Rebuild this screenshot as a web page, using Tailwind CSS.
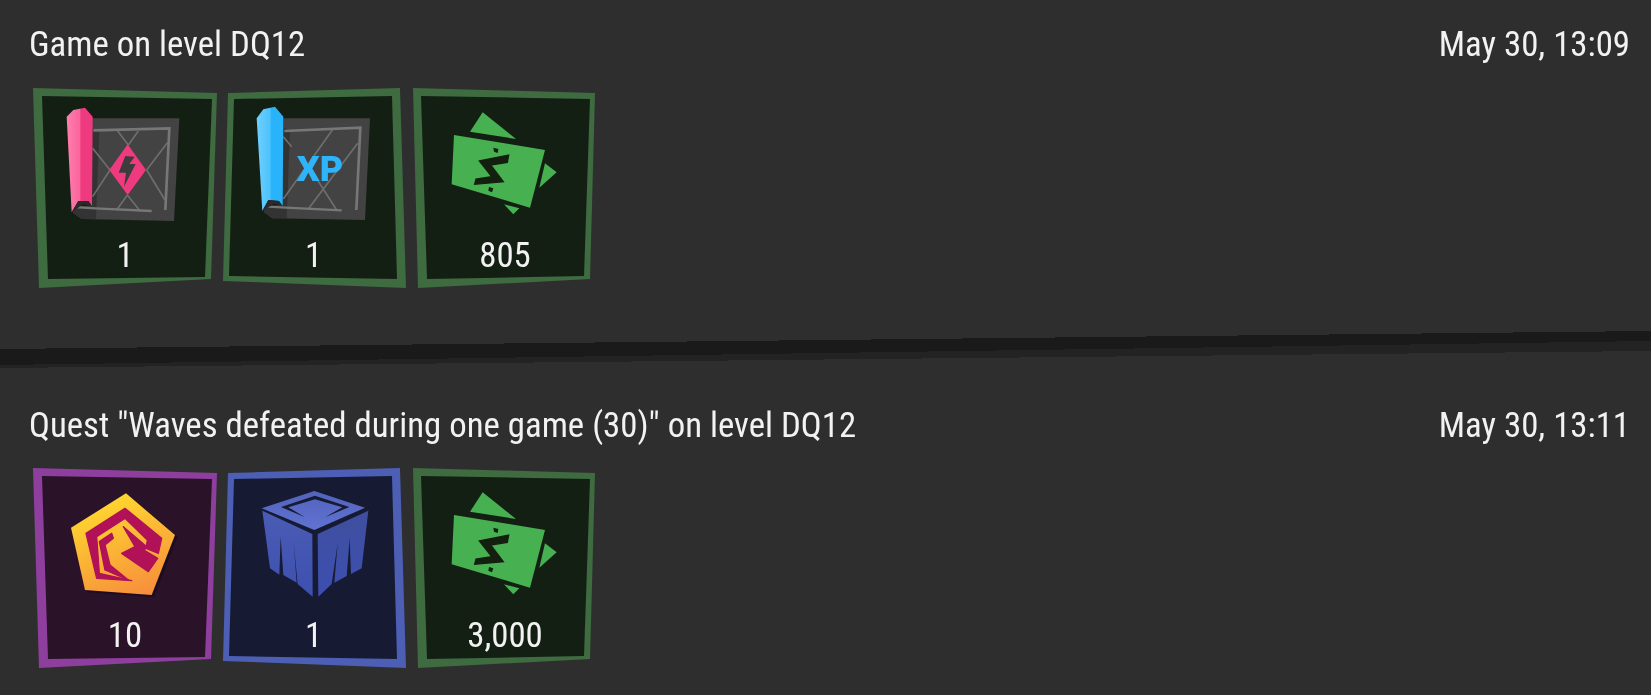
<!DOCTYPE html>
<html lang="en">
<head>
<meta charset="utf-8">
<script src="https://cdn.jsdelivr.net/npm/@tailwindcss/browser@4"></script>
<title>Rewards</title>
</head>
<body class="m-0 w-[1651px] h-[695px] overflow-hidden bg-[#2e2e2e] text-[#f2f2f2] [font-family:Roboto,sans-serif]">
<svg width="0" height="0" class="absolute">
  <defs>
    <linearGradient id="pink" x1="0" x2="1" y1="0" y2="0"><stop offset="0" stop-color="#ff7fae"/><stop offset=".5" stop-color="#fa659c"/><stop offset=".55" stop-color="#f03a80"/><stop offset="1" stop-color="#f03a80"/></linearGradient>
    <linearGradient id="blue" x1="0" x2="1" y1="0" y2="0"><stop offset="0" stop-color="#6fd0ff"/><stop offset=".5" stop-color="#4cc2fc"/><stop offset=".55" stop-color="#28b3fb"/><stop offset="1" stop-color="#28b3fb"/></linearGradient>
    <linearGradient id="gold" x1="0.3" x2="0.7" y1="0" y2="1"><stop offset="0" stop-color="#ffdc2e"/><stop offset="1" stop-color="#f78f3c"/></linearGradient>
    <linearGradient id="cubeL" x1="0" x2="0" y1="0" y2="1"><stop offset="0" stop-color="#4a5cb4"/><stop offset="1" stop-color="#3d50b0"/></linearGradient>
    <linearGradient id="cubeR" x1="0" x2="0" y1="0" y2="1"><stop offset="0" stop-color="#3f4f9f"/><stop offset="1" stop-color="#3c4fb0"/></linearGradient>
    <linearGradient id="cubeT" x1="0" x2="0" y1="0" y2="1"><stop offset="0" stop-color="#5263bb"/><stop offset="1" stop-color="#6073d2"/></linearGradient>
  </defs>
</svg>

<main class="flex flex-col">
  <section class="h-[331px] pl-[29px] pr-[21px] pt-[23px] flex flex-col blur-[0.5px]">
    <div class="flex justify-between items-center h-[42px] text-[34.8px] leading-[42px]">
      <span class="[font-stretch:75%]">Game on level DQ12</span>
      <span class="[font-stretch:75%]">May 30, 13:09</span>
    </div>
    <div class="flex gap-[6px] mt-[22px] ml-[4px]">
      <!-- map pink -->
      <div class="relative w-[184px] h-[202px] flex flex-col items-center justify-end pb-[17px]">
        <svg class="absolute inset-0" width="184" height="202" viewBox="0 0 184 202" aria-hidden="true">
          <polygon points="0,1 184,6 178,192 6,201" fill="#3f6b41"/>
          <polygon points="9,9 179,12 172,190 15,192" fill="#141f14"/>
          <g transform="translate(-13 -12) scale(.33333)">
            <polygon points="215,130 478,130 462,438 185,432 160,415 158,400 215,395" fill="#434343"/>
            <polygon points="215,160 238,168 228,432 185,432 160,415 160,400 212,390" fill="#333333"/>
            <path d="M293,168 L325,210 M355,168 L325,210 M290,405 L322,360 M358,405 L322,360 M218,220 L270,285 M218,365 L270,285 M442,203 L380,285 M435,375 L380,285" fill="none" stroke="#6e6e6e" stroke-width="5"/>
            <path d="M220,166 L448,160 L436,405" fill="none" stroke="#777" stroke-width="8"/>
            <path d="M165,396 L225,400 L395,408" fill="none" stroke="#777" stroke-width="7"/>
            <polygon points="323,208 378,285 323,360 268,285" fill="#f03a80"/>
            <polygon points="316,243 344,245 328,267 347,267 312,335 318,293 296,293" fill="#3c3c3c"/>
            <polygon points="140,125 160,105 195,98 218,125 216,392 205,378 175,378 155,412" fill="url(#pink)"/>
            <polygon points="155,412 175,378 205,378 212,394 190,388 172,400" fill="#2a2a2a"/>
          </g>
        </svg>
        <span class="relative text-[34.8px] leading-[33px] [font-stretch:75%]">1</span>
      </div>
      <!-- map blue -->
      <div class="relative w-[184px] h-[202px] flex flex-col items-center justify-end pb-[17px]">
        <svg class="absolute inset-0" width="184" height="202" viewBox="0 0 184 202" aria-hidden="true">
          <polygon points="5,6 177,1 183,201 0,194" fill="#3f6b41"/>
          <polygon points="11,12 169,9 174,192 6,189" fill="#141f14"/>
          <g transform="translate(-8 -12) scale(.33333)">
            <polygon points="205,130 465,130 450,435 172,430 147,412 145,398 205,392" fill="#434343"/>
            <polygon points="205,158 225,165 215,430 172,430 147,412 147,398 200,388" fill="#333333"/>
            <path d="M352,165 L205,372 M428,205 L280,402 M205,185 L230,215 M285,280 L365,405" fill="none" stroke="#6e6e6e" stroke-width="5"/>
            <path d="M208,168 L436,158 L424,405" fill="none" stroke="#777" stroke-width="8"/>
            <path d="M152,394 L212,398 L380,406" fill="none" stroke="#777" stroke-width="7"/>
            <text x="245" y="318" font-family="Roboto" font-weight="900" font-size="108" fill="#2db4fa">XP</text>
            <polygon points="125,130 145,103 180,95 205,125 203,392 192,378 160,375 142,408" fill="url(#blue)"/>
            <polygon points="142,408 160,375 192,378 199,392 177,386 158,398" fill="#2a2a2a"/>
          </g>
        </svg>
        <span class="relative text-[34.8px] leading-[33px] [font-stretch:75%] -ml-[3px]">1</span>
      </div>
      <!-- money -->
      <div class="relative w-[184px] h-[202px] flex flex-col items-center justify-end pb-[17px]">
        <svg class="absolute inset-0" width="184" height="202" viewBox="0 0 184 202" aria-hidden="true">
          <polygon points="0,1 182,6 177,192 5,201" fill="#3f6b41"/>
          <polygon points="8,9 177,12 171,189 14,192" fill="#141f14"/>
          <g transform="translate(-13 -12) scale(.33333)">
            <polygon points="248,112 348,192 210,170" fill="#47b152"/>
            <polygon points="435,265 470,292 418,338" fill="#47b152"/>
            <polygon points="312,388 358,400 340,418" fill="#47b152"/>
            <polygon points="162,180 435,225 390,398 155,328" fill="#47b152"/>
            <polygon points="238,258 326,240 322,262 272,270 310,320 224,328 228,312 275,305" fill="#14200f" stroke="#14200f" stroke-width="4"/>
            <polygon points="280,218 295,222 293,234 282,230" fill="#14200f"/>
            <polygon points="267,336 280,340 276,352 265,347" fill="#14200f"/>
          </g>
        </svg>
        <span class="relative text-[34.8px] leading-[33px] [font-stretch:75%]">805</span>
      </div>
    </div>
  </section>

  <svg class="block w-[1651px] h-[37px] shrink-0" viewBox="0 0 1651 37" preserveAspectRatio="none" shape-rendering="crispEdges" aria-hidden="true">
    <polygon points="0,18 1651,0 1651,20 0,37" fill="#232323"/>
    <polygon points="0,18 1651,0 1651,10 0,34" fill="#1a1a1a"/>
  </svg>

  <section class="pl-[29px] pr-[21px] pt-[36px] flex flex-col blur-[0.5px]">
    <div class="flex justify-between items-center h-[42px] text-[34.8px] leading-[42px]">
      <span class="[font-stretch:75%]">Quest "Waves defeated during one game (30)" on level DQ12</span>
      <span class="[font-stretch:75%]">May 30, 13:11</span>
    </div>
    <div class="flex gap-[6px] mt-[21px] ml-[4px]">
      <!-- pentagon -->
      <div class="relative w-[184px] h-[202px] flex flex-col items-center justify-end pb-[17px]">
        <svg class="absolute inset-0" width="184" height="202" viewBox="0 0 184 202" aria-hidden="true">
          <polygon points="0,1 184,6 178,192 6,201" fill="#8e3f9e"/>
          <polygon points="9,9 179,12 172,190 15,192" fill="#2a1228"/>
          <g transform="translate(-13 -7) scale(.33333)">
            <polygon points="325,106 473,230 402,412 202,397 160,208" fill="#1e0d22"/>
            <polygon points="318,100 465,225 395,405 195,390 153,203" fill="url(#gold)"/>
            <g fill="#b01157" stroke="#b01157" stroke-width="4" stroke-linejoin="round">
              <polygon points="315,145 425,235 415,280 378,265 382,240 315,175 230,230 238,340 335,362 230,355 198,220"/>
              <polygon points="275,220 238,245 255,330 325,360 270,315 255,255 280,235"/>
              <polygon points="310,200 382,262 372,270 413,295 385,335 305,280 345,260"/>
            </g>
          </g>
        </svg>
        <span class="relative text-[34.8px] leading-[33px] [font-stretch:75%]">10</span>
      </div>
      <!-- cube -->
      <div class="relative w-[184px] h-[202px] flex flex-col items-center justify-end pb-[17px]">
        <svg class="absolute inset-0" width="184" height="202" viewBox="0 0 184 202" aria-hidden="true">
          <polygon points="5,6 177,1 183,201 0,194" fill="#4c5fb5"/>
          <polygon points="11,12 169,9 174,192 6,189" fill="#161b33"/>
          <g transform="translate(-8 -7) scale(.33333)">
            <polygon points="298,93 450,143 298,210 140,145" fill="url(#cubeT)"/>
            <polygon points="300,107 403,141 330,172 382,142 300,118 220,142 270,172 198,141" fill="#161b33"/>
            <polygon points="142,152 292,222 293,410 248,372 236,250 245,368 205,345 197,230 193,344 165,325" fill="url(#cubeL)"/>
            <polygon points="308,222 460,152 440,325 408,342 404,235 395,348 358,368 368,250 350,372 310,410" fill="url(#cubeR)"/>
          </g>
        </svg>
        <span class="relative text-[34.8px] leading-[33px] [font-stretch:75%] -ml-[3px]">1</span>
      </div>
      <!-- money -->
      <div class="relative w-[184px] h-[202px] flex flex-col items-center justify-end pb-[17px]">
        <svg class="absolute inset-0" width="184" height="202" viewBox="0 0 184 202" aria-hidden="true">
          <polygon points="0,1 182,6 177,192 5,201" fill="#3f6b41"/>
          <polygon points="8,9 177,12 171,189 14,192" fill="#141f14"/>
          <g transform="translate(-13 -12) scale(.33333)">
            <polygon points="248,112 348,192 210,170" fill="#47b152"/>
            <polygon points="435,265 470,292 418,338" fill="#47b152"/>
            <polygon points="312,388 358,400 340,418" fill="#47b152"/>
            <polygon points="162,180 435,225 390,398 155,328" fill="#47b152"/>
            <polygon points="238,258 326,240 322,262 272,270 310,320 224,328 228,312 275,305" fill="#14200f" stroke="#14200f" stroke-width="4"/>
            <polygon points="280,218 295,222 293,234 282,230" fill="#14200f"/>
            <polygon points="267,336 280,340 276,352 265,347" fill="#14200f"/>
          </g>
        </svg>
        <span class="relative text-[34.8px] leading-[33px] [font-stretch:75%]">3,000</span>
      </div>
    </div>
  </section>
</main>
</body>
</html>
